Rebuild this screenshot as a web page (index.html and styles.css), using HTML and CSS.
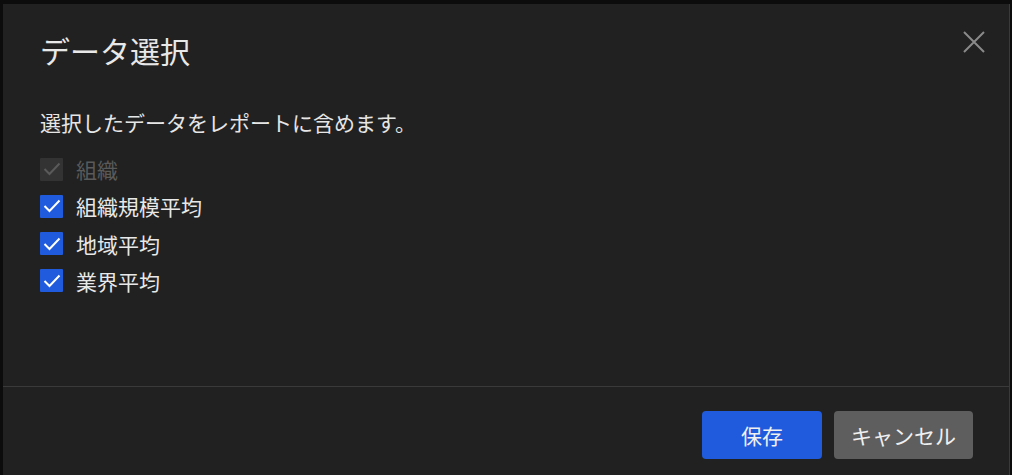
FILE: index.html
```html
<!DOCTYPE html>
<html lang="ja">
<head>
<meta charset="utf-8">
<link rel="stylesheet" href="styles.css">
</head>
<body>
<div class="page">
  <div class="modal">
    <div class="header">
      <h1 class="title">データ選択</h1>
      <button class="close" aria-label="閉じる">
        <svg width="22" height="22" viewBox="0 0 22 22"><path d="M1 1L21 21M21 1L1 21" stroke="#8a8a8a" stroke-width="2" fill="none"/></svg>
      </button>
    </div>
    <div class="body">
      <p class="desc">選択したデータをレポートに含めます。</p>
      <ul class="list">
        <li class="item disabled"><span class="box"><svg width="18" height="14" viewBox="0 0 18 14"><path d="M1.5 7L6.5 12L16.5 1.5" stroke="currentColor" stroke-width="2" fill="none"/></svg></span><span class="label">組織</span></li>
        <li class="item"><span class="box"><svg width="18" height="14" viewBox="0 0 18 14"><path d="M1.5 7L6.5 12L16.5 1.5" stroke="currentColor" stroke-width="2" fill="none"/></svg></span><span class="label">組織規模平均</span></li>
        <li class="item"><span class="box"><svg width="18" height="14" viewBox="0 0 18 14"><path d="M1.5 7L6.5 12L16.5 1.5" stroke="currentColor" stroke-width="2" fill="none"/></svg></span><span class="label">地域平均</span></li>
        <li class="item"><span class="box"><svg width="18" height="14" viewBox="0 0 18 14"><path d="M1.5 7L6.5 12L16.5 1.5" stroke="currentColor" stroke-width="2" fill="none"/></svg></span><span class="label">業界平均</span></li>
      </ul>
    </div>
    <div class="footer">
      <button class="btn primary">保存</button>
      <button class="btn secondary">キャンセル</button>
    </div>
  </div>
</div>
</body>
</html>
```
FILE: styles.css
```css
html, body {
  margin: 0;
  padding: 0;
  background: #0c0c0c;
  height: 100%;
  overflow: hidden;
}
body {
  font-family: "Noto Sans CJK JP", "Noto Sans", sans-serif;
  color: #e6e6e6;
}
.page {
  padding: 4px 2px 0 3px;
  height: 100%;
  box-sizing: border-box;
}
.modal {
  background: #212121;
  height: 100%;
  border-right: 1px solid #3a3a3a;
  display: flex;
  flex-direction: column;
}
.header {
  display: flex;
  justify-content: space-between;
  align-items: flex-start;
  padding: 26px 24px 0 37px;
}
.title {
  margin: 0;
  font-size: 30px;
  font-weight: 400;
  line-height: 40px;
  color: #e8e8e8;
}
.close {
  background: none;
  border: 0;
  padding: 0;
  margin-top: 1px;
  width: 22px;
  height: 22px;
  cursor: pointer;
}
.body {
  padding: 0 37px;
  height: 316px;
  box-sizing: border-box;
}
.desc {
  margin: 37px 0 0;
  font-size: 21px;
  line-height: 30px;
  color: #e6e6e6;
}
.list {
  list-style: none;
  margin: 20px 0 0;
  padding: 0;
  display: flex;
  flex-direction: column;
  gap: 13.3px;
}
.item {
  display: flex;
  align-items: center;
  gap: 13px;
  height: 24px;
}
.box {
  width: 23px;
  height: 23px;
  background: #1f5bdc;
  color: #ffffff;
  border-radius: 1px;
  display: flex;
  align-items: center;
  justify-content: center;
}
.label {
  font-size: 21px;
  line-height: 24px;
  color: #e8e8e8;
}
.item.disabled .box {
  background: #333333;
  color: #5a5a5a;
}
.item.disabled .label {
  color: #5a5a5a;
}
.footer {
  border-top: 1px solid #3a3a3a;
  display: flex;
  justify-content: flex-end;
  gap: 12px;
  padding: 24px 36px 0 0;
}
.btn {
  height: 48px;
  border: 0;
  border-radius: 4px;
  font-family: inherit;
  font-size: 21px;
  color: #f0f0f0;
  cursor: pointer;
}
.primary {
  width: 120px;
  background: #1f5bdc;
}
.secondary {
  width: 139px;
  background: #5e5e5e;
}
```
